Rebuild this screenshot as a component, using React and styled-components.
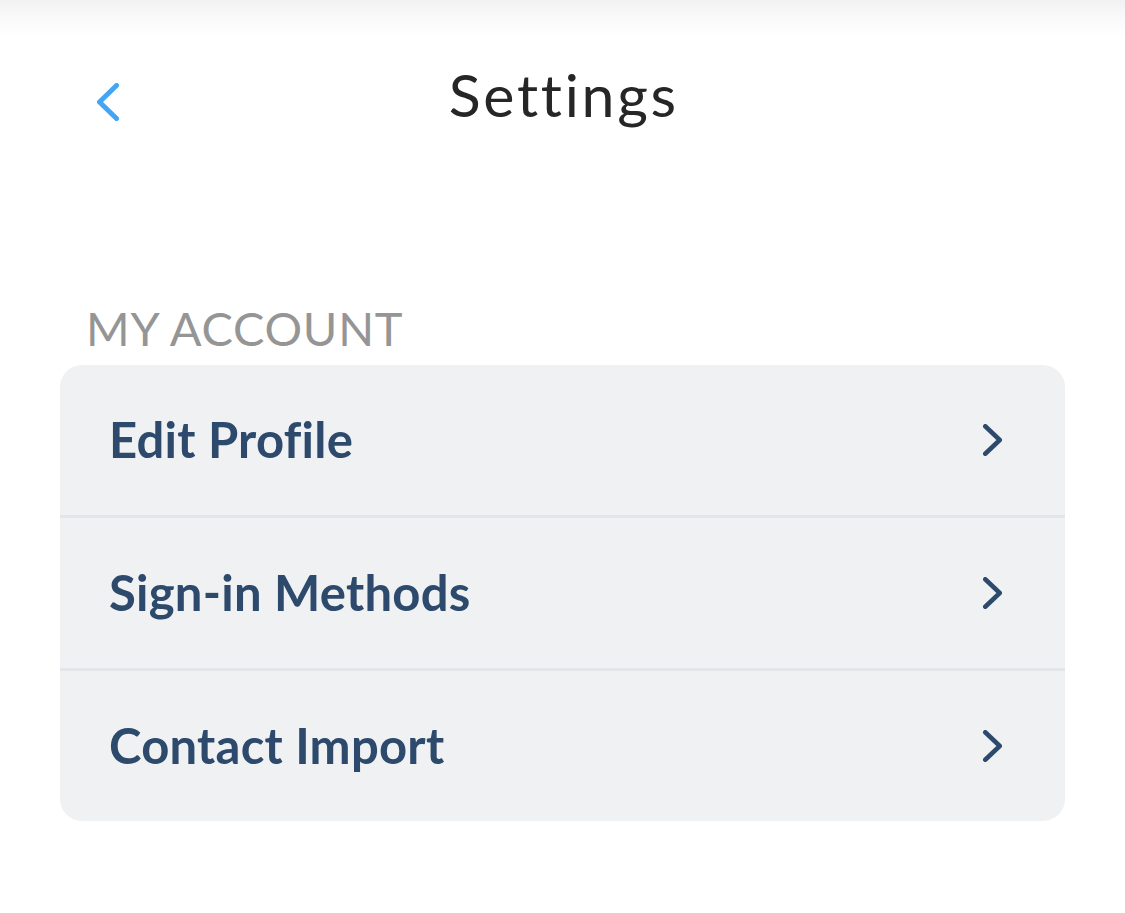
import React from 'react';
import styled, { createGlobalStyle } from 'styled-components';

const GlobalStyle = createGlobalStyle`
    html, body { margin:0; padding:0; background:#fff; }
    body { font-family:Lato, "Noto Sans", sans-serif; }
`

const Page = styled.div`
    min-height:913px;
    background:linear-gradient(#f1f1f1 0, #fafafa 18px, #fff 38px);
`

const Header = styled.header`
    position:relative;
    height:188px;
    display:flex;
    align-items:center;
    justify-content:center;
`

const BackButton = styled.button`
    position:absolute;
    left:97px;
    top:83px;
    padding:0;
    border:0;
    background:none;
    display:flex;
`

const Title = styled.h1`
    margin:0 0 0 2.7px;
    font-size:59px;
    font-weight:400;
    color:#262626;
    line-height:1;
    letter-spacing:2.7px;
`

const Section = styled.section`
    padding:117px 60px 0;
`

const SectionLabel = styled.h2`
    margin:0 0 13px 26px;
    font-size:47px;
    font-weight:400;
    color:#959595;
    line-height:1;
    letter-spacing:0.75px;
`

const Card = styled.div`
    background:#f0f1f3;
    border-radius:22px;
    overflow:hidden;
`

const Row = styled.div`
    height:150px;
    display:flex;
    align-items:center;
    justify-content:space-between;
    padding:0 63px 0 49px;
    border-top:${p => (p.$first ? 'none' : '3px solid #e4e5e8')};
`

const RowLabel = styled.span`
    font-size:49px;
    font-weight:700;
    color:#2d4a6d;
    line-height:1;
    letter-spacing:0.25px;
    margin-top:-2px;
`

const Chevron = ({ dir, color, w, h, sw }) => {
    const i = sw / 2
    const pts = dir === 'left'
        ? `${w - i},${i} ${i},${h / 2} ${w - i},${h - i}`
        : `${i},${i} ${w - i},${h / 2} ${i},${h - i}`
    return (
        <svg width={w} height={h} viewBox={`0 0 ${w} ${h}`} fill="none">
            <polyline points={pts} stroke={color} strokeWidth={sw} strokeLinecap="round" strokeLinejoin="round" />
        </svg>
    )
}

const items = ['Edit Profile', 'Sign-in Methods', 'Contact Import']

const App = () => {
    return (
        <Page>
            <GlobalStyle />
            <Header>
                <BackButton aria-label="Back">
                    <Chevron dir="left" color="#42a5f5" w={22} h={38} sw={5} />
                </BackButton>
                <Title>Settings</Title>
            </Header>
            <Section>
                <SectionLabel>MY ACCOUNT</SectionLabel>
                <Card>
                    {items.map((item, i) => (
                        <Row key={item} $first={i === 0}>
                            <RowLabel>{item}</RowLabel>
                            <Chevron dir="right" color="#2d4a6d" w={19} h={32} sw={4.5} />
                        </Row>
                    ))}
                </Card>
            </Section>
        </Page>
    );
}

export default App;
